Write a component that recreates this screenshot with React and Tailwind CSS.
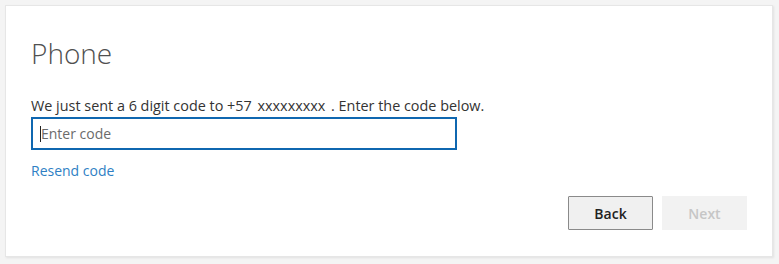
export default function App() {
  return (
    <div className="w-[779px] h-[264px] bg-[#f4f4f4] pt-[5px] pl-[5px] pr-[6px] pb-[7px] font-['Open_Sans',sans-serif]">
      <div className="h-full bg-white border border-[#e6e6e6] shadow-[1px_1px_2px_rgba(0,0,0,0.08)] pl-[25px] pr-[25px] pt-[29px] flex flex-col">
        <h1 className="text-[28px] leading-[36px] font-light text-[#505050]">Phone</h1>
        <p className="mt-[26px] text-[14.4px] leading-[18px] text-[#333] whitespace-nowrap">
          We just sent a 6 digit code to +57 <span className="ml-[2px] mr-[2px]">xxxxxxxxx</span> . Enter the code below.
        </p>
        <div className="mt-[2px] w-[426px] h-[33px] border-2 border-[#0f67b0] flex items-center pl-[7px]">
          <span className="w-px h-[16px] bg-[#222]" />
          <span className="text-[14px] text-[#6b6b6b]">Enter code</span>
        </div>
        <a className="mt-[12px] text-[14px] leading-[18px] text-[#2f7fc4] self-start">Resend code</a>
        <div className="mt-[16px] flex justify-end gap-[9px]">
          <button className="w-[85px] h-[34px] bg-[#f0f0f0] border border-[#8a8a8a] rounded-[1px] text-[14px] font-semibold text-[#222]">Back</button>
          <button className="w-[85px] h-[34px] bg-[#f2f2f2] text-[14px] font-semibold text-[#c6c6c6]">Next</button>
        </div>
      </div>
    </div>
  );
}
